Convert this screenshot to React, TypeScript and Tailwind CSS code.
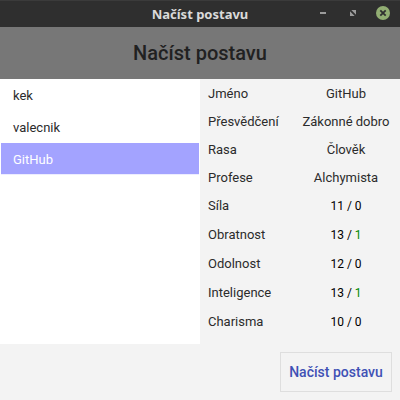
import React from "react";

const characters = ["kek", "valecnik", "GitHub"];

const details = [
  ["Jméno", "GitHub"],
  ["Přesvědčení", "Zákonné dobro"],
  ["Rasa", "Člověk"],
  ["Profese", "Alchymista"],
];

const abilities: [string, number, number][] = [
  ["Síla", 11, 0],
  ["Obratnost", 13, 1],
  ["Odolnost", 12, 0],
  ["Inteligence", 13, 1],
  ["Charisma", 10, 0],
];

function TitleBar() {
  return (
    <div className="grid h-[27px] grid-cols-[1fr_auto_1fr] items-center border-t border-[#3b3b3b] bg-[#2f2f2f] font-['Noto_Sans',sans-serif]">
      <span />
      <span className="pt-px text-[13px] leading-none font-bold text-[#dadada]">Načíst postavu</span>
      <svg className="justify-self-end" width="90" height="26" viewBox="0 1 90 26">
        <rect x="10" y="12" width="6" height="2" fill="#9b9b9b" />
        <path d="M41.3 10H46v4.7zM40 11.3v4.7h4.7z" fill="#9b9b9b" />
        <circle cx="73" cy="13" r="7" fill="#92ae73" />
        <path d="M70.3 10.3l5.4 5.4M75.7 10.3l-5.4 5.4" stroke="#2f2f2f" strokeWidth="1.8" />
      </svg>
    </div>
  );
}

export default function App() {
  return (
    <div className="flex h-[400px] w-[400px] flex-col overflow-hidden bg-[#f3f3f3] font-['Roboto',sans-serif] text-[13px] text-[#2b2b2b]">
      <TitleBar />
      <header className="flex h-[52px] items-center justify-center bg-[#777777] text-[20px] font-medium text-[#212121]">
        Načíst postavu
      </header>
      <main className="flex h-[265px]">
        <ul className="w-[200px] bg-white px-px">
          {characters.map((name) => (
            <li
              key={name}
              className={
                "flex h-8 items-center border-b pt-0.5 pl-3 " +
                (name === "GitHub" ? "border-[#ededff] bg-[#a3a3ff] text-white" : "border-white")
              }
            >
              {name}
            </li>
          ))}
        </ul>
        <dl className="w-[200px] pl-2">
          {details.map(([label, value]) => (
            <div key={label} className="flex h-7 items-center">
              <dt className="w-[76px] pt-px whitespace-nowrap">{label}</dt>
              <dd className="w-[116px] shrink-0 pt-px pl-[8px] text-center whitespace-nowrap">{value}</dd>
            </div>
          ))}
          {abilities.map(([label, value, bonus]) => (
            <div key={label} className="flex h-[29px] items-center">
              <dt className="w-[76px]">{label}</dt>
              <dd className="w-[116px] shrink-0 pl-[8px] text-center text-[12px] text-black">
                {value} / <span className={bonus > 0 ? "text-[#008a00]" : ""}>{bonus}</span>
              </dd>
            </div>
          ))}
        </dl>
      </main>
      <footer className="flex justify-end pt-2 pr-2">
        <button className="h-10 w-[112px] border border-[#dedede] text-[14px] font-medium whitespace-nowrap text-[#3f51b5]">
          Načíst postavu
        </button>
      </footer>
    </div>
  );
}
